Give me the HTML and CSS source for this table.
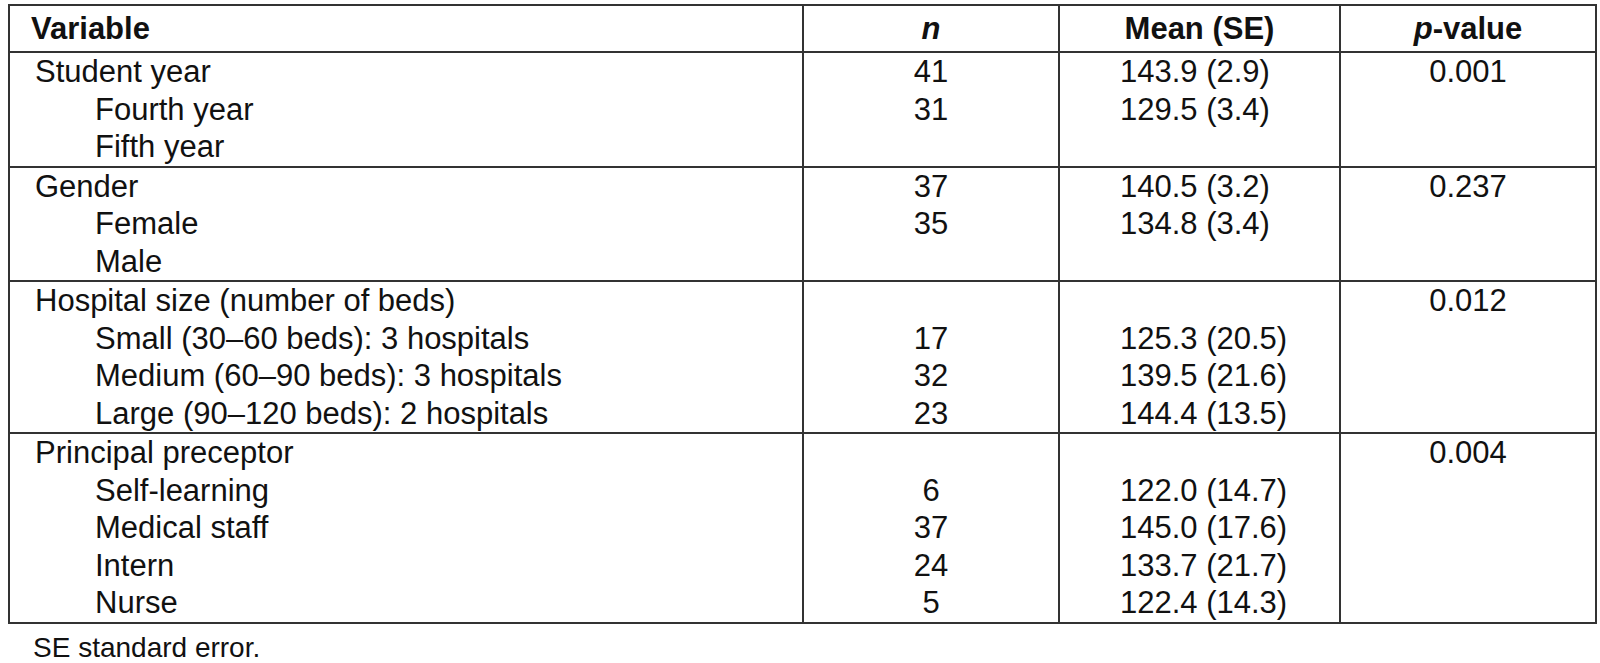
FILE: index.html
```html
<!DOCTYPE html>
<html lang="en">
<head>
<meta charset="utf-8">
<title>Table</title>
<link rel="stylesheet" href="styles.css">
</head>
<body>
<table class="stats">
  <colgroup>
    <col class="c-var">
    <col class="c-n">
    <col class="c-mean">
    <col class="c-p">
  </colgroup>
  <thead>
    <tr>
      <th class="var">Variable</th>
      <th class="ctr"><i>n</i></th>
      <th class="ctr">Mean (SE)</th>
      <th class="ctr"><i>p</i>-value</th>
    </tr>
  </thead>
  <tbody>
    <tr>
      <td class="var"><div class="grp">Student year</div><div class="sub">Fourth year</div><div class="sub">Fifth year</div></td>
      <td class="ctr"><div>41</div><div>31</div></td>
      <td class="mean"><div>143.9 (2.9)</div><div>129.5 (3.4)</div></td>
      <td class="ctr"><div>0.001</div></td>
    </tr>
    <tr>
      <td class="var"><div class="grp">Gender</div><div class="sub">Female</div><div class="sub">Male</div></td>
      <td class="ctr"><div>37</div><div>35</div></td>
      <td class="mean"><div>140.5 (3.2)</div><div>134.8 (3.4)</div></td>
      <td class="ctr"><div>0.237</div></td>
    </tr>
    <tr>
      <td class="var"><div class="grp">Hospital size (number of beds)</div><div class="sub">Small (30–60 beds): 3 hospitals</div><div class="sub">Medium (60–90 beds): 3 hospitals</div><div class="sub">Large (90–120 beds): 2 hospitals</div></td>
      <td class="ctr"><div class="blank">&nbsp;</div><div>17</div><div>32</div><div>23</div></td>
      <td class="mean"><div class="blank">&nbsp;</div><div>125.3 (20.5)</div><div>139.5 (21.6)</div><div>144.4 (13.5)</div></td>
      <td class="ctr"><div>0.012</div></td>
    </tr>
    <tr>
      <td class="var"><div class="grp">Principal preceptor</div><div class="sub">Self-learning</div><div class="sub">Medical staff</div><div class="sub">Intern</div><div class="sub">Nurse</div></td>
      <td class="ctr"><div class="blank">&nbsp;</div><div>6</div><div>37</div><div>24</div><div>5</div></td>
      <td class="mean"><div class="blank">&nbsp;</div><div>122.0 (14.7)</div><div>145.0 (17.6)</div><div>133.7 (21.7)</div><div>122.4 (14.3)</div></td>
      <td class="ctr"><div>0.004</div></td>
    </tr>
  </tbody>
</table>
<p class="note">SE standard error.</p>
</body>
</html>
```

FILE: styles.css
```css
html, body {
  margin: 0;
  padding: 0;
  background: #ffffff;
}

body {
  font-family: "Liberation Sans", Arial, sans-serif;
  color: #111111;
}

.stats {
  border-collapse: collapse;
  table-layout: fixed;
  width: 1587px;
  margin: 4px 0 0 8px;
  font-size: 31px;
  line-height: 37.5px;
  border: 2px solid #333333;
}

.c-var { width: 794px; }
.c-n { width: 256px; }
.c-mean { width: 281px; }
.c-p { width: 256px; }

.stats th,
.stats td {
  border-left: 2px solid #333333;
  border-right: 2px solid #333333;
  padding: 0;
  vertical-align: top;
}

.stats th {
  font-weight: bold;
  line-height: 38px;
  padding-top: 4px;
  padding-bottom: 3px;
  border-bottom: 2px solid #333333;
}

.stats tbody tr {
  border-top: 2px solid #333333;
}

.stats th.var {
  text-align: left;
  padding-left: 21px;
}

.stats td.var {
  text-align: left;
  padding-left: 25px;
}

.sub {
  padding-left: 60px;
}

.ctr {
  text-align: center;
}

.stats td.mean {
  text-align: left;
  padding-left: 60px;
}

.note {
  margin: 8px 0 0 0;
  padding-left: 33px;
  font-size: 28px;
  line-height: 32px;
}
```
